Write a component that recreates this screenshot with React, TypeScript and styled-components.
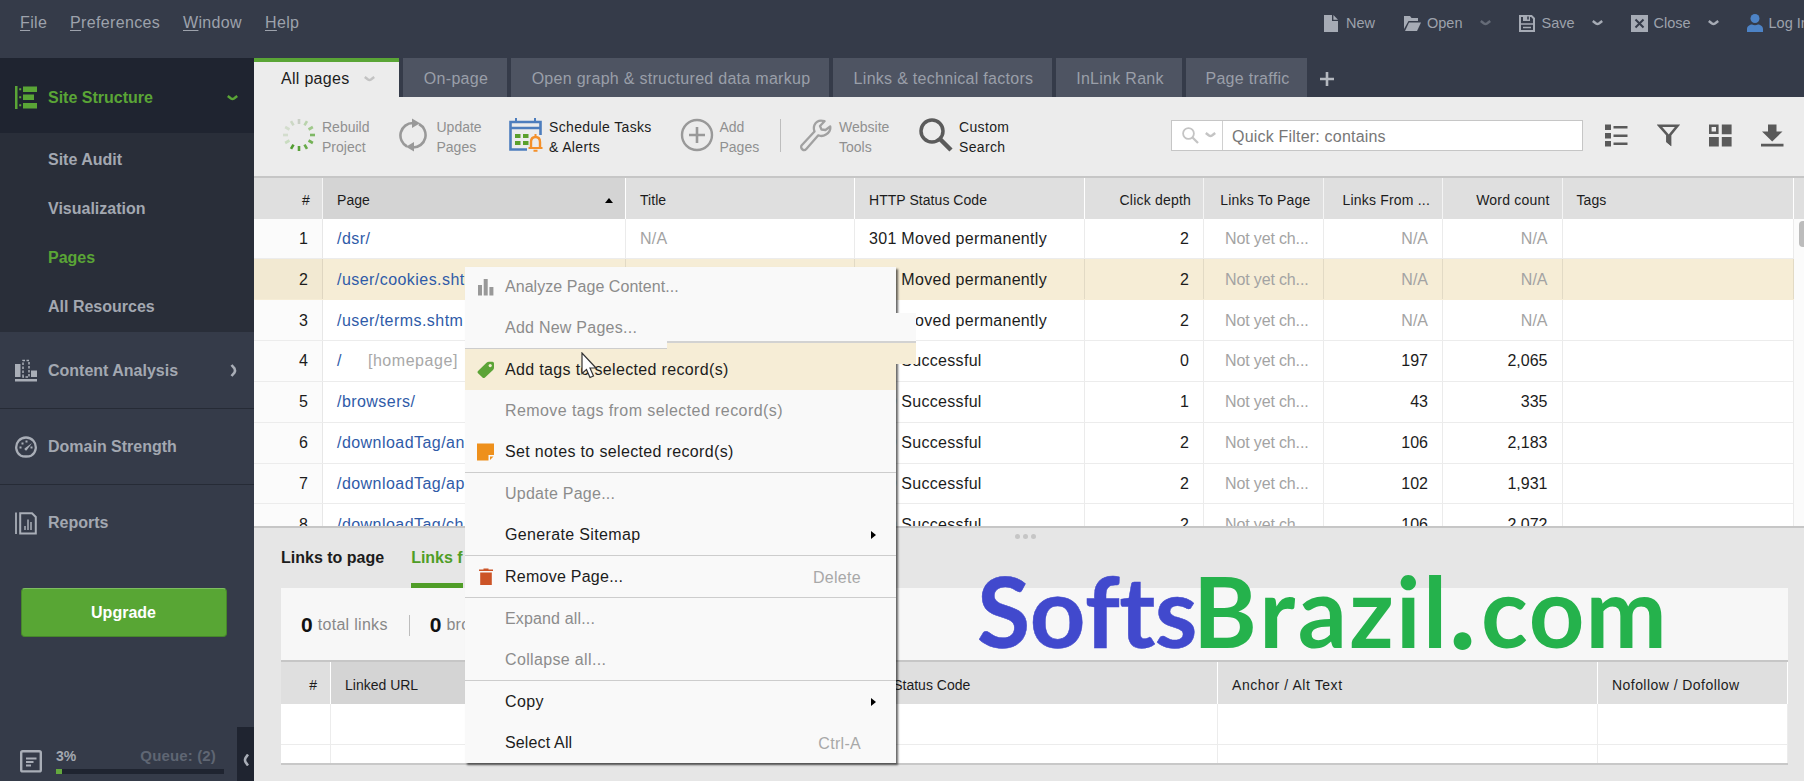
import React from 'react';
import styled, {createGlobalStyle} from "styled-components";

type RowData = {
    page: string
    note?: string
    title: string
    status: string
    depth: string
    linksFrom: string
    words: string
    selected?: boolean
}

const rows: RowData[] = [
    {page: "/dsr/", title: "N/A", status: "301 Moved permanently", depth: "2", linksFrom: "N/A", words: "N/A"},
    {page: "/user/cookies.sht", title: "", status: "301 Moved permanently", depth: "2", linksFrom: "N/A", words: "N/A", selected: true},
    {page: "/user/terms.shtm", title: "", status: "301 Moved permanently", depth: "2", linksFrom: "N/A", words: "N/A"},
    {page: "/", note: "[homepage]", title: "", status: "200 Successful", depth: "0", linksFrom: "197", words: "2,065"},
    {page: "/browsers/", title: "", status: "200 Successful", depth: "1", linksFrom: "43", words: "335"},
    {page: "/downloadTag/an", title: "", status: "200 Successful", depth: "2", linksFrom: "106", words: "2,183"},
    {page: "/downloadTag/ap", title: "", status: "200 Successful", depth: "2", linksFrom: "102", words: "1,931"},
    {page: "/downloadTag/ch", title: "", status: "200 Successful", depth: "2", linksFrom: "106", words: "2,072"},
]

const tabs = [
    {label: "On-page", width: 104},
    {label: "Open graph & structured data markup", width: 318},
    {label: "Links & technical factors", width: 219},
    {label: "InLink Rank", width: 126},
    {label: "Page traffic", width: 121},
]

const spinnerColors = ["#c9cfc5", "#b9d3ac", "#a0c98b", "#7fb866", "#74b256", "#67aa48", "#5aa23a", "#519c30", "#c9dcc0", "#d3ddcd", "#d3ddcd", "#ccd8c5"]

const Chevron = ({color, size = 11}: { color: string, size?: number }) => (
    <svg width={size} height={6} viewBox="0 0 11 6">
        <path d="M0.800 1L4 3.500Q5.500 4.500 7 3.500L10.200 1" fill="none" stroke={color} strokeWidth="2.500"/>
    </svg>
)

const NewIcon = () => (
    <svg width="14" height="17" viewBox="0 0 14 17" fill="#a6abb5">
        <path d="M0 0h8v6h6v11H0z"/>
        <path d="M9.4 0L14 4.8H9.4z"/>
    </svg>
)

const OpenIcon = () => (
    <svg width="17" height="16" viewBox="0 0 17 16" fill="#a6abb5">
        <path d="M0 14V1h6l1.500 2H14v3H4.500z"/>
        <path d="M5 7.500h12L13 16H1z"/>
    </svg>
)

const SaveIcon = () => (
    <svg width="16" height="17" viewBox="0 0 16 17">
        <path d="M1 1h11.500L15 3.500V16H1z" fill="none" stroke="#a6abb5" strokeWidth="2"/>
        <path d="M4 1h7v5H4z" fill="#a6abb5"/>
        <path d="M8.200 1.500h1.600v3H8.200z" fill="#353b49"/>
        <path d="M1 9h14M4 12.500h8" stroke="#a6abb5" strokeWidth="1.500"/>
    </svg>
)

const CloseIcon = () => (
    <svg width="17" height="17" viewBox="0 0 17 17">
        <path d="M0 0h17v17H0z" fill="#a6abb5"/>
        <path d="M4.500 4.500l8 8M12.500 4.500l-8 8" stroke="#353b49" strokeWidth="2"/>
    </svg>
)

const UserIcon = () => (
    <svg width="16" height="18" viewBox="0 0 16 18" fill="#4d83c6">
        <circle cx="8" cy="4.500" r="4.500"/>
        <path d="M0 18v-3c0-3 3-4.500 5-4.500q3 1.500 6 0c2 0 5 1.500 5 4.500v3z"/>
    </svg>
)

const StructureIcon = () => (
    <svg width="22" height="23" viewBox="0 0 22 23" fill="#5aa536">
        <path d="M0 0h2.500v23H0zM8 0.500h14v5.500H8zM8 8.500h11v5.500H8zM8 17h14v5.500H8zM4.200 2.300h2v2h-2zM4.200 10.300h2v2h-2zM4.200 18.300h2v2h-2z"/>
    </svg>
)

const ContentIcon = () => (
    <svg width="22" height="23" viewBox="0 0 22 23">
        <path d="M0 5h5.500v13H0zM16 11.500h6V18h-6zM0 20h22v2.500H0z" fill="#a9aeb7"/>
        <path d="M8 18V1.500h6V18z" fill="none" stroke="#a9aeb7" strokeWidth="1.500" strokeDasharray="2.500 1.500"/>
    </svg>
)

const DomainIcon = () => (
    <svg width="22" height="22" viewBox="0 0 22 22">
        <path d="M5.500 19.400A9.800 9.800 0 1 1 16.500 19.400Q14.500 20.500 11 20.500T5.500 19.400z" fill="none" stroke="#a9aeb7" strokeWidth="2.300"/>
        <path d="M17 7L11.500 14.500Q9.500 15 9.500 12.500z" fill="#a9aeb7"/>
        <path d="M4.500 10.500h2v2h-2zM6.500 6.500h2v2h-2zM10.500 4.500h2v2h-2zM15.500 10.500h2v2h-2z" fill="#a9aeb7"/>
    </svg>
)

const ReportsIcon = () => (
    <svg width="22" height="23" viewBox="0 0 22 23" fill="none" stroke="#a9aeb7">
        <path d="M1 0.500v21.500" strokeWidth="1.800"/>
        <path d="M5.200 1.200H17L20.800 5V21.500H5.200z" strokeWidth="2"/>
        <path d="M10 18v-4M13 18V7.500M16 18v-8" strokeWidth="1.500"/>
    </svg>
)

const TaskIcon = () => (
    <svg width="22" height="23" viewBox="0 0 22 23" fill="none" stroke="#a9aeb7" strokeWidth="2.400">
        <rect x="1.200" y="1.200" width="19.600" height="20.200" rx="1.500"/>
        <path d="M6 8.500h10.500M6 12h7.500M6 15.500h5" strokeWidth="2"/>
    </svg>
)

const SpinnerIcon = () => (
    <svg width="34" height="34" viewBox="0 0 34 34">
        {spinnerColors.map((color, i) => (
            <path key={i} d="M17 1v5" stroke={color} strokeWidth="2.600" transform={`rotate(${i * 30} 17 17)`}/>
        ))}
    </svg>
)

const UpdateIcon = () => (
    <svg width="28" height="34" viewBox="0 0 28 34">
        <path d="M8 28.500A12.500 12.500 0 0 1 14 5M20 6A12.500 12.500 0 0 1 14 29.500" fill="none" stroke="#999" strokeWidth="2.600"/>
        <path d="M13 0.500l8 4.800-8 4.700zM15 24l-8 4.800 8 4.700z" fill="#999"/>
    </svg>
)

const ScheduleIcon = () => (
    <svg width="34" height="34" viewBox="0 0 34 34">
        <path d="M18 31.500H1.500V4H31.500V17M1.500 10H31.500" fill="none" stroke="#4d7dbd" strokeWidth="2.600"/>
        <path d="M7 0v5M26 0v5" stroke="#4d7dbd" strokeWidth="2"/>
        <path d="M6 16h5.500v4H6zM14 16h5.500v4H14zM6 23h5.500v4H6zM14 23h5.500v4H14z" fill="#5aa02c"/>
        <path d="M22 29v-5q0-5 4.500-5t4.500 5v5" fill="none" stroke="#f4902a" strokeWidth="2.400"/>
        <path d="M19.500 30h14M26.500 16v3M24.500 32.700h4" stroke="#f4902a" strokeWidth="2"/>
    </svg>
)

const AddIcon = () => (
    <svg width="34" height="34" viewBox="0 0 34 34" fill="none" stroke="#999" strokeWidth="2.400">
        <circle cx="17" cy="17" r="15"/>
        <path d="M17 9v16M9 17h16" strokeWidth="2.600"/>
    </svg>
)

const WrenchIcon = () => (
    <svg width="32" height="33" viewBox="0 0 32 33" fill="none" stroke="#a1a1a1" strokeWidth="2.300" strokeLinejoin="round">
        <path d="M24.500 2.200Q17.500 0 14.500 6Q13.200 9 14.500 12.500L1.500 26.500Q0.500 29 2.500 30.500Q4.500 32 6.300 30L18.300 16.300Q22 18 26 15.500Q31 12.500 30.200 7.500L25.500 11L21.500 10.500L20 7z"/>
    </svg>
)

const SearchIcon = () => (
    <svg width="34" height="34" viewBox="0 0 34 34" fill="none" stroke="#5b5b5b">
        <circle cx="13" cy="13" r="11" strokeWidth="3.500"/>
        <path d="M20.500 20.500L32 32" strokeWidth="4.500"/>
    </svg>
)

const SmallSearchIcon = () => (
    <svg width="17" height="17" viewBox="0 0 17 17" fill="none" stroke="#c4c4c4" strokeWidth="1.800">
        <circle cx="6.500" cy="6.500" r="5.400"/>
        <path d="M10.500 10.500L16 16" strokeWidth="2.300"/>
    </svg>
)

const ListIcon = () => (
    <svg width="23" height="23" viewBox="0 0 23 23" fill="#5a5a5a">
        <path d="M0 0.500h6v5.500H0zM0 9h6v5.500H0zM0 17h6v5.500H0zM8.500 2h14v2.500h-14zM8.500 10.500h14V13h-14zM8.500 18.500h14V21h-14z"/>
    </svg>
)

const FunnelIcon = () => (
    <svg width="23" height="23" viewBox="0 0 23 23">
        <path d="M2.500 1.800H20.500L13 11V19.500L10.500 17.500V11z" fill="none" stroke="#5a5a5a" strokeWidth="2.600"/>
        <path d="M9.300 11h4.800v11l-4.800-4z" fill="#5a5a5a"/>
    </svg>
)

const TilesIcon = () => (
    <svg width="23" height="23" viewBox="0 0 23 23" fill="#5a5a5a">
        <path d="M1.300 1.800h7v7h-7z" fill="none" stroke="#5a5a5a" strokeWidth="2.600"/>
        <path d="M12.800 0.500h9.800v9.700h-9.800zM0 13h9.800v9.500H0zM12.800 13h9.800v9.500h-9.800z"/>
    </svg>
)

const DownloadIcon = () => (
    <svg width="23" height="23" viewBox="0 0 23 23" fill="#5a5a5a">
        <path d="M7 0.500h8.500v7h6L11.200 17.500 1 7.500h6zM0 19.800h22.500v2.600H0z"/>
    </svg>
)

const BarsIcon = () => (
    <svg width="16" height="18" viewBox="0 0 16 18" fill="#999">
        <path d="M0 7h4v10.500H0zM5.700 1h4v16.500h-4zM11.400 9h4v8.500h-4z"/>
    </svg>
)

const TagIcon = () => (
    <svg width="18" height="18" viewBox="0 0 18 18">
        <path d="M9.500 1.800Q10.500 0.800 12 0.800H15.500Q17 0.800 17 2.500V6.500Q17 8 16 9L8 16.500Q6.500 17.500 5.500 16.500L0.800 12Q0 11 1 10z" fill="#5ca437"/>
        <circle cx="13.200" cy="4.600" r="1.600" fill="#f6edd6"/>
    </svg>
)

const NoteIcon = () => (
    <svg width="18" height="18" viewBox="0 0 18 18" fill="#ee901c">
        <path d="M0 0.500h17V12h-5.500v5.500H0z"/>
        <path d="M13 17l3.500-3.500H13z"/>
    </svg>
)

const TrashIcon = () => (
    <svg width="14" height="18" viewBox="0 0 14 18" fill="#cc5427">
        <path d="M0 1.500h4.500V0.500h5v1h4.500v1.500H0zM1.200 4.500h11.600v12.500H1.200z"/>
    </svg>
)

type MenuEntry = {
    label: string
    disabled?: boolean
    icon?: React.ReactNode
    active?: boolean
    submenu?: boolean
    shortcut?: string
    spacing?: number
}

const menuGroups: MenuEntry[][] = [
    [
        {label: "Analyze Page Content...", disabled: true, icon: <BarsIcon/>, spacing: 0.05},
        {label: "Add New Pages...", disabled: true, spacing: 0.25},
    ],
    [
        {label: "Add tags to selected record(s)", icon: <TagIcon/>, active: true, spacing: 0.34},
        {label: "Remove tags from selected record(s)", disabled: true, spacing: 0.42},
        {label: "Set notes to selected record(s)", icon: <NoteIcon/>, spacing: 0.35},
    ],
    [
        {label: "Update Page...", disabled: true, spacing: 0.25},
        {label: "Generate Sitemap", submenu: true, spacing: 0.35},
    ],
    [
        {label: "Remove Page...", icon: <TrashIcon/>, shortcut: "Delete", spacing: 0.25},
    ],
    [
        {label: "Expand all...", disabled: true, spacing: 0.15},
        {label: "Collapse all...", disabled: true, spacing: 0.35},
    ],
    [
        {label: "Copy", submenu: true},
        {label: "Select All", shortcut: "Ctrl-A", spacing: 0.15},
    ],
]

const Header = () => (
    <MenuBar>
        <MainMenu>
            <MenuLink $width={50}><u>F</u>ile</MenuLink>
            <MenuLink $width={113}><u>P</u>references</MenuLink>
            <MenuLink $width={82}><u>W</u>indow</MenuLink>
            <MenuLink $width={50}><u>H</u>elp</MenuLink>
        </MainMenu>
        <Actions>
            <Action $width={80} $gap={8}><NewIcon/>New</Action>
            <Action $width={114.5} $gap={6}><OpenIcon/>Open<Push $right={28}><Chevron color="#656b77"/></Push></Action>
            <Action $width={112} $gap={7}><SaveIcon/>Save<Push $right={28}><Chevron color="#a6abb5"/></Push></Action>
            <Action $width={116} $gap={6}><CloseIcon/>Close<Push $right={28}><Chevron color="#a6abb5"/></Push></Action>
            <Action $width={70} $gap={6}><UserIcon/>Log In</Action>
        </Actions>
    </MenuBar>
)

const Sidebar = () => (
    <SidebarWrap>
        <Section $active>
            <StructureIcon/>
            <SectionName>Site Structure</SectionName>
            <Chevron color="#5aa536"/>
        </Section>
        <SubMenu>
            <SubItem>Site Audit</SubItem>
            <SubItem>Visualization</SubItem>
            <SubItem $active>Pages</SubItem>
            <SubItem>All Resources</SubItem>
        </SubMenu>
        <Section>
            <ContentIcon/>
            <SectionName>Content Analysis</SectionName>
            <svg width="8" height="13" viewBox="0 0 8 13">
                <path d="M1.500 1L4.500 4.500Q5.500 6.500 4.500 8.500L1.500 12" fill="none" stroke="#a9aeb7" strokeWidth="2.600"/>
            </svg>
        </Section>
        <Section>
            <DomainIcon/>
            <SectionName>Domain Strength</SectionName>
        </Section>
        <Section>
            <ReportsIcon/>
            <SectionName>Reports</SectionName>
        </Section>
        <Upgrade>Upgrade</Upgrade>
        <Progress>
            <TaskIcon/>
            <ProgressInfo>
                <ProgressText>
                    <span>3%</span>
                    <Queue>Queue: (2)</Queue>
                </ProgressText>
                <Track><Fill style={{width: "3.6%"}}/></Track>
            </ProgressInfo>
            <Collapse>
                <svg width="6" height="12" viewBox="0 0 6 12">
                    <path d="M5 0.500L2.500 4Q1.500 6 2.500 8L5 11.500" fill="none" stroke="#a9aeb7" strokeWidth="2.600"/>
                </svg>
            </Collapse>
        </Progress>
    </SidebarWrap>
)

const Toolbar = () => (
    <ToolbarWrap>
        <Tool $width={117} $gap={6}><SpinnerIcon/><ToolName>Rebuild<br/>Project</ToolName></Tool>
        <Tool $width={109.5} $gap={9.5}><UpdateIcon/><ToolName>Update<br/>Pages</ToolName></Tool>
        <Tool $width={171} $gap={6.5} $dark><ScheduleIcon/><ToolName>Schedule Tasks<br/>&amp; Alerts</ToolName></Tool>
        <Tool $width={100.5} $gap={6}><AddIcon/><ToolName>Add<br/>Pages</ToolName></Tool>
        <Divider/>
        <Tool $width={119} $gap={7}><WrenchIcon/><ToolName>Website<br/>Tools</ToolName></Tool>
        <Tool $width={252} $gap={6} $dark><SearchIcon/><ToolName>Custom<br/>Search</ToolName></Tool>
        <Filter>
            <FilterType><SmallSearchIcon/><Chevron color="#c4c4c4"/></FilterType>
            <FilterText>Quick Filter: contains</FilterText>
        </Filter>
        <ViewTools><ListIcon/><FunnelIcon/><TilesIcon/><DownloadIcon/></ViewTools>
    </ToolbarWrap>
)

const PagesTable = () => (
    <TableArea>
        <HeadRow>
            <HeadCell $right>#</HeadCell>
            <HeadCell $sorted>
                Page
                <svg width="8" height="5" viewBox="0 0 8 5"><path d="M0 5L4 0l4 5z"/></svg>
            </HeadCell>
            <HeadCell>Title</HeadCell>
            <HeadCell>HTTP Status Code</HeadCell>
            <HeadCell $right>Click depth</HeadCell>
            <HeadCell $right>Links To Page</HeadCell>
            <HeadCell $right>Links From ...</HeadCell>
            <HeadCell $right>Word count</HeadCell>
            <HeadCell>Tags</HeadCell>
            <HeadCell/>
        </HeadRow>
        <TableBody>
            <div>
                {rows.map((row, i) => (
                    <Row key={i} $selected={row.selected}>
                        <Cell $right $index>{i + 1}</Cell>
                        <Cell $link>{row.page}{row.note && <Note>{row.note}</Note>}</Cell>
                        <Cell $muted>{row.title}</Cell>
                        <Cell>{row.status}</Cell>
                        <Cell $right>{row.depth}</Cell>
                        <Cell $right $muted $tight>Not yet ch...</Cell>
                        <Cell $right $muted={row.linksFrom === "N/A"}>{row.linksFrom}</Cell>
                        <Cell $right $muted={row.words === "N/A"}>{row.words}</Cell>
                        <Cell/>
                    </Row>
                ))}
            </div>
            <Scroll><Thumb/></Scroll>
        </TableBody>
    </TableArea>
)

const LinksPanel = () => (
    <Panel>
        <Grip><i/><i/><i/></Grip>
        <PanelTabs>
            <PanelTab>Links to page</PanelTab>
            <PanelTab $active>Links f</PanelTab>
        </PanelTabs>
        <Card>
            <Summary>
                <b>0</b><span>total links</span>
                <SummaryDivider/>
                <b>0</b><span>bro</span>
            </Summary>
            <LinkHead>
                <LinkHeadCell $right>#</LinkHeadCell>
                <LinkHeadCell $sorted $spacing={0}>Linked URL</LinkHeadCell>
                <LinkHeadCell $spacing={0}>HTTP Status Code</LinkHeadCell>
                <LinkHeadCell $spacing={0.57}>Anchor / Alt Text</LinkHeadCell>
                <LinkHeadCell $spacing={0.45}>Nofollow / Dofollow</LinkHeadCell>
            </LinkHead>
            <LinkRow $height={40}><i/><i/><i/><i/><i/></LinkRow>
            <LinkRow $height={19}><i/><i/><i/><i/><i/></LinkRow>
        </Card>
        <Brand><Soft>Softs</Soft><Brazil>Brazil</Brazil><Dot>.</Dot><Com>com</Com></Brand>
    </Panel>
)

const ContextMenu = () => (
    <Menu>
        <Ghost/>
        <MenuBody>
            {menuGroups.map((group, i) => (
                <MenuGroup key={i}>
                    {group.map(item => (
                        <MenuItem key={item.label} $disabled={item.disabled} $active={item.active} $spacing={item.spacing}>
                            <IconSlot>{item.icon}</IconSlot>
                            <MenuLabel>{item.label}</MenuLabel>
                            {item.shortcut && <Shortcut>{item.shortcut}</Shortcut>}
                            {item.submenu &&
                                <svg width="5" height="8" viewBox="0 0 5 8"><path d="M0 0l5 4-5 4z"/></svg>}
                        </MenuItem>
                    ))}
                </MenuGroup>
            ))}
        </MenuBody>
        <Cursor width="17" height="27" viewBox="0 0 17 27">
            <path d="M1 1V21.500L5.500 17.500L9 25.500L12.500 24L9 16H15z" fill="#fff" stroke="#333" strokeWidth="1.200"/>
        </Cursor>
    </Menu>
)

const App = () => {
    return (
        <Window>
            <GlobalStyle/>
            <Header/>
            <Body>
                <Sidebar/>
                <Main>
                    <TabBar>
                        <ActiveTab>All pages<Chevron color="#c3c3c3"/></ActiveTab>
                        {tabs.map(tab => <Tab key={tab.label} $width={tab.width}>{tab.label}</Tab>)}
                        <svg width="14" height="14" viewBox="0 0 14 14">
                            <path d="M7 0v14M0 7h14" stroke="#b4b8bf" strokeWidth="2.600"/>
                        </svg>
                    </TabBar>
                    <Toolbar/>
                    <PagesTable/>
                    <LinksPanel/>
                </Main>
            </Body>
            <ContextMenu/>
        </Window>
    );
};

export default App;

const GlobalStyle = createGlobalStyle`
  * {
    box-sizing: border-box;
  }

  body {
    margin: 0;
    overflow: hidden;
    font-family: "Liberation Sans", Arial, sans-serif;
    font-size: 16px;
    color: #1c1c1c;
  }

  svg {
    flex-shrink: 0;
  }
`
const Window = styled.div`
  position: relative;
  width: 1804px;
  height: 781px;
  overflow: hidden;
  background-color: #353b49;
`
const MenuBar = styled.header`
  display: flex;
  justify-content: space-between;
  height: 58px;
  padding: 0 0 12px 20px;
  color: #9da2ac;
`
const MainMenu = styled.nav`
  display: flex;
  align-items: center;
  letter-spacing: 0.35px;
`
const MenuLink = styled.a<{ $width: number }>`
  width: ${p => p.$width}px;

  u {
    text-underline-offset: 2px;
  }
`
const Actions = styled.div`
  display: flex;
  align-items: center;
  width: 480px;
  font-size: 14.5px;
`
const Action = styled.div<{ $width: number, $gap: number }>`
  display: flex;
  align-items: center;
  flex: none;
  gap: ${p => p.$gap}px;
  width: ${p => p.$width}px;
  white-space: nowrap;
`
const Push = styled.span<{ $right: number }>`
  display: flex;
  margin-left: auto;
  padding-right: ${p => p.$right}px;
`
const Body = styled.div`
  display: flex;
  height: 723px;
`
const SidebarWrap = styled.aside`
  display: flex;
  flex-direction: column;
  width: 254px;
  flex: none;
  font-weight: bold;
  color: #a3a8b1;
`
const Section = styled.div<{ $active?: boolean }>`
  display: flex;
  align-items: center;
  gap: 11px;
  height: ${p => p.$active ? 75 : 76}px;
  padding: ${p => p.$active ? 4 : 1}px 16px 0 15px;
  color: ${p => p.$active ? "#5aa536" : "#a3a8b1"};
  background-color: ${p => p.$active ? "#1f2430" : "transparent"};

  & + & {
    border-top: 1px solid #262b36;
  }
`
const SectionName = styled.span`
  flex: 1;
`
const SubMenu = styled.ul`
  display: flex;
  flex-direction: column;
  height: 199px;
  margin: 0;
  padding: 3px 0 0 48px;
  list-style: none;
  background-color: #292e39;
`
const SubItem = styled.li<{ $active?: boolean }>`
  height: 48.9px;
  line-height: 48px;
  color: ${p => p.$active ? "#5aa536" : "#a3a8b1"};
`
const Upgrade = styled.button`
  width: 206px;
  height: 49px;
  margin: 28px 0 0 20.5px;
  padding-top: 2px;
  border: 1px solid #47872b;
  border-top-color: #7dbd60;
  border-radius: 4px;
  background-color: #58a634;
  color: #fff;
  font: bold 16px "Liberation Sans", Arial, sans-serif;
`
const Progress = styled.div`
  display: flex;
  align-items: flex-end;
  height: 54px;
  margin-top: auto;
  padding-left: 20px;

  > svg {
    margin-bottom: 8px;
  }
`
const ProgressInfo = styled.div`
  width: 168px;
  margin: 0 13px 7px 14px;
`
const ProgressText = styled.div`
  display: flex;
  justify-content: space-between;
  padding-right: 8px;
  margin-bottom: 4px;
  font-size: 14px;
  line-height: 18px;
`
const Queue = styled.span`
  font-size: 15px;
  letter-spacing: 0.15px;
  color: #5f6673;
`
const Track = styled.div`
  height: 5px;
  background-color: #1f2430;
`
const Fill = styled.div`
  height: 100%;
  background-color: #64a83e;
`
const Collapse = styled.div`
  display: flex;
  align-items: center;
  justify-content: center;
  width: 17px;
  height: 54px;
  padding-top: 11px;
  background-color: #1f2430;
`
const Main = styled.main`
  display: flex;
  flex-direction: column;
  width: 1550px;
  background-color: #ececec;
`
const TabBar = styled.div`
  display: flex;
  align-items: center;
  gap: 4px;
  height: 38.5px;
  background-color: #353b49;
  letter-spacing: 0.2px;

  > svg {
    margin: 3px 0 0 9px;
  }
`
const ActiveTab = styled.div`
  display: flex;
  align-items: center;
  gap: 14px;
  width: 145px;
  height: 100%;
  padding-left: 27px;
  border-top: 4px solid #5aa536;
  background-color: #ececec;
  letter-spacing: 0.3px;
`
const Tab = styled.div<{ $width: number }>`
  display: flex;
  align-items: center;
  justify-content: center;
  width: ${p => p.$width}px;
  height: 100%;
  padding: 3px 0 0 2px;
  background-color: #4e5462;
  color: #9a9fa9;
  letter-spacing: 0.29px;
  white-space: nowrap;
`
const ToolbarWrap = styled.div`
  display: flex;
  align-items: center;
  flex: none;
  height: 81px;
  padding: 0 0 2px 28px;
  border-bottom: 2px solid #c6c6c6;
`
const Tool = styled.div<{ $width: number, $gap: number, $dark?: boolean }>`
  display: flex;
  align-items: center;
  flex: none;
  gap: ${p => p.$gap}px;
  width: ${p => p.$width}px;
  font-size: 14px;
  line-height: 20.5px;
  letter-spacing: ${p => p.$dark ? 0.35 : 0}px;
  white-space: nowrap;
  color: ${p => p.$dark ? "#1c1c1c" : "#909090"};
`
const ToolName = styled.span`
  padding-top: 4px;
`
const Divider = styled.div`
  width: 1px;
  height: 33px;
  margin-right: 19px;
  background-color: #bdbdbd;
`
const Filter = styled.div`
  display: flex;
  width: 412px;
  height: 31px;
  border: 1px solid #c6c6c6;
  background-color: #fff;
`
const FilterType = styled.div`
  display: flex;
  align-items: center;
  gap: 6px;
  width: 51px;
  padding-left: 10px;
  border-right: 1px solid #d0d0d0;
`
const FilterText = styled.div`
  padding-left: 9px;
  line-height: 32px;
  letter-spacing: 0.2px;
  color: #777;
`
const ViewTools = styled.div`
  display: flex;
  gap: 29px;
  margin-left: 22px;
`
const TableArea = styled.section`
  flex: none;
  height: 350.5px;
  border-bottom: 2px solid #c6c6c6;
  background-color: #fff;
`
const HeadRow = styled.div`
  display: grid;
  grid-template-columns: 69px 303px 229px 229.5px 119.5px 119.5px 119.5px 119.5px 231px 1fr;
  height: 41px;
`
const HeadCell = styled.div<{ $right?: boolean, $sorted?: boolean }>`
  display: flex;
  align-items: center;
  justify-content: ${p => p.$right ? "flex-end" : p.$sorted ? "space-between" : "flex-start"};
  padding: 4px 12px 0 14px;
  border-right: ${p => p.$sorted || !p.$right ? "1px solid #fff" : "1px solid #f4f4f4"};
  background-color: ${p => p.$sorted ? "#d4d4d4" : "#dfdfdf"};
  font-size: 14px;
  letter-spacing: ${p => p.$right ? 0.2 : 0.05}px;
  white-space: nowrap;
`
const TableBody = styled.div`
  display: flex;
  height: 307.5px;
  overflow: hidden;
`
const Row = styled.div<{ $selected?: boolean }>`
  display: grid;
  grid-template-columns: 69px 303px 229px 229.5px 119.5px 119.5px 119.5px 119.5px 231px;
  height: 40.85px;
  border-bottom: 1px solid ${p => p.$selected ? "#f6edd6" : "#ececec"};
  background-color: ${p => p.$selected ? "#f6edd6" : "#fff"};
`
const Cell = styled.div<{ $right?: boolean, $link?: boolean, $muted?: boolean, $index?: boolean, $tight?: boolean }>`
  display: flex;
  align-items: center;
  justify-content: ${p => p.$right ? "flex-end" : "flex-start"};
  padding: 1px 14px 0 14px;
  border-right: 1px solid rgba(0, 0, 0, 0.08);
  background-color: ${p => p.$index ? "rgba(0, 0, 0, 0.015)" : "transparent"};
  color: ${p => p.$link ? "#2f5ba8" : p.$muted ? "#a3a3a3" : "#1c1c1c"};
  letter-spacing: ${p => p.$link ? 0.45 : p.$tight ? -0.15 : p.$right ? 0 : 0.3}px;
  white-space: nowrap;
`
const Note = styled.span`
  margin-left: 26px;
  letter-spacing: 0.55px;
  color: #a8a8a8;
`
const Scroll = styled.div`
  flex: 1;
  padding: 2px 0 2px 5px;
  background-color: #fbfbfb;
`
const Thumb = styled.div`
  height: 26px;
  border-radius: 4px 0 0 4px;
  background-color: #bcbcbc;
`
const Panel = styled.section`
  position: relative;
  flex: 1;
  padding: 0 16px 0 27px;
  background-color: #e6e6e6;
`
const Grip = styled.div`
  display: flex;
  justify-content: center;
  gap: 3px;
  height: 13px;
  padding: 6px 19px 0 0;

  i {
    width: 5px;
    height: 5px;
    border-radius: 50%;
    background-color: #c6c6c6;
  }
`
const PanelTabs = styled.div`
  display: flex;
  gap: 27px;
  height: 47px;
  font-weight: bold;
`
const PanelTab = styled.div<{ $active?: boolean }>`
  line-height: 33px;
  color: ${p => p.$active ? "#4f9d27" : "#1c1c1c"};
  border-bottom: 5px solid ${p => p.$active ? "#4f9d27" : "transparent"};
`
const Card = styled.div`
  border-bottom: 2px solid #c8c8c8;
  background-color: #fff;
`
const Summary = styled.div`
  display: flex;
  align-items: center;
  height: 74px;
  padding: 2px 0 0 20px;
  border-bottom: 2px solid #c6c6c6;
  background-color: #f7f7f7;
  color: #888;
  letter-spacing: 0.3px;

  b {
    margin-right: 5px;
    font-size: 21px;
    color: #111;
    letter-spacing: 0;
  }
`
const SummaryDivider = styled.div`
  width: 1px;
  height: 21px;
  margin: 0 20px 0 21px;
  background-color: #bdbdbd;
`
const linkColumns = "50px 508px 379px 380px 190px"
const LinkHead = styled.div`
  display: grid;
  grid-template-columns: ${linkColumns};
  height: 42px;
`
const LinkHeadCell = styled.div<{ $right?: boolean, $sorted?: boolean, $spacing?: number }>`
  display: flex;
  align-items: center;
  justify-content: ${p => p.$right ? "flex-end" : "flex-start"};
  padding: 4px 13px 0 14px;
  border-right: 1px solid #fff;
  background-color: ${p => p.$sorted ? "#d4d4d4" : "#dfdfdf"};
  font-size: 14px;
  letter-spacing: ${p => p.$spacing ?? 0}px;
  white-space: nowrap;
`
const LinkRow = styled.div<{ $height: number }>`
  display: grid;
  grid-template-columns: ${linkColumns};
  height: ${p => p.$height}px;

  i {
    border-right: 1px solid #ececec;
  }

  & + & {
    border-top: 1px solid #ececec;
  }
`
// watermark lying over the bottom panel
const Brand = styled.div`
  position: absolute;
  left: 723px;
  top: 23px;
  display: flex;
  font: 700 97px/120px Lato, "Open Sans", sans-serif;
  font-kerning: none;
  font-variant-ligatures: none;
  white-space: nowrap;
`
const Soft = styled.span`
  width: 216px;
  letter-spacing: -0.5px;
  color: #4149cd;
  -webkit-text-stroke: 0.5px #4149cd;
`
const Brazil = styled.span`
  width: 258px;
  letter-spacing: 2.3px;
  color: #25b24c;
`
const Dot = styled.span`
  width: 30px;
  color: #25b24c;
  -webkit-text-stroke: 3px #25b24c;
`
const Com = styled.span`
  letter-spacing: 1px;
  color: #25b24c;
`
const Menu = styled.div`
  position: absolute;
  left: 465px;
  top: 267px;
  width: 431px;
  height: 496px;
  background-color: #f9f9f9;
  box-shadow: 2px 2px 2px rgba(0, 0, 0, 0.6);
`
const MenuBody = styled.div`
  position: relative;
`
const MenuGroup = styled.div`
  & + & {
    border-top: 1px solid #cdcdcd;
  }

  &:first-child {
    margin-top: -1px;
  }
`
const MenuItem = styled.div<{ $disabled?: boolean, $active?: boolean, $spacing?: number }>`
  display: flex;
  align-items: center;
  height: 41px;
  padding: 0 20px 0 0;
  letter-spacing: ${p => p.$spacing ?? 0.4}px;
  color: ${p => p.$disabled ? "#8c8c8c" : "#1c1c1c"};
  background-color: ${p => p.$active ? "#f6edd6" : "transparent"};
`
const IconSlot = styled.span`
  display: flex;
  justify-content: center;
  width: 18px;
  margin: 0 10px 0 12px;
`
const MenuLabel = styled.span`
  flex: 1;
`
const Shortcut = styled.span`
  padding: 2px 15px 0 0;
  letter-spacing: 0.3px;
  color: #a8a8a8;
`
// leftover strip of the highlighted line, shifted to the right
const Ghost = styled.div`
  position: absolute;
  z-index: 1;
  left: 202px;
  top: 46px;
  width: 249px;
  height: 51px;
  background: linear-gradient(#f9f9f9 28px, #d2d2d2 28px, #d2d2d2 30px, #f6edd6 30px);
  clip-path: polygon(229px 0, 100% 0, 100% 100%, 229px 100%, 229px 40px, 0 40px, 0 28px, 229px 28px);
`
const Cursor = styled.svg`
  position: absolute;
  left: 116px;
  top: 85px;
`
